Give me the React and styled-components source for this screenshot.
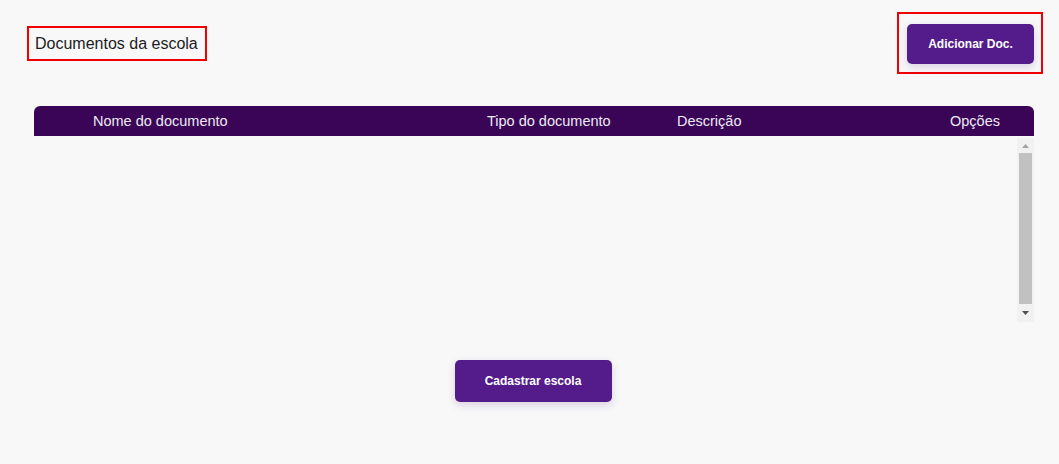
import React from 'react';
import styled, { createGlobalStyle } from 'styled-components';

const GlobalStyle = createGlobalStyle`
  html, body {
    margin: 0;
    padding: 0;
    background-color: #f8f8f8;
    font-family: "Liberation Sans", Arial, sans-serif;
  }
`;

const Page = styled.main`
  padding: 12px 25px 40px 34px;
  min-height: 464px;
  box-sizing: border-box;
`;

const TopBar = styled.header`
  display: flex;
  justify-content: space-between;
  align-items: center;
  margin-left: -7px;
  margin-right: -9px;
`;

const Highlight = styled.div`
  border: 2px solid #f00000;
  padding: ${p => p.$pad || '0'};
`;

const Title = styled.h1`
  margin: 0;
  font-size: 16px;
  font-weight: 500;
  color: #1c1c22;
  line-height: 31px;
`;

const Button = styled.button`
  border: none;
  border-radius: 5px;
  background-color: #541c8a;
  color: #ffffff;
  font-family: inherit;
  font-weight: 700;
  font-size: 12px;
  width: ${p => p.$width};
  height: ${p => p.$height};
  box-shadow: 0 3px 8px rgba(84, 28, 138, 0.18);
  cursor: pointer;
`;

const Table = styled.section`
  margin-top: 32px;
  width: 1000px;
`;

const HeaderRow = styled.div`
  display: grid;
  grid-template-columns: 453px 190px 1fr auto;
  align-items: center;
  height: 30px;
  padding: 0 34px 0 0;
  background-color: #3a0556;
  border-radius: 6px 6px 0 0;
  color: #eceaf4;
  font-size: 14.5px;
`;

const HeaderCell = styled.div`
  padding-left: ${p => p.$indent || '0'};
`;

const Body = styled.div`
  display: flex;
  height: 186px;
`;

const Rows = styled.div`
  flex: 1;
  overflow: hidden;
`;

const ScrollTrack = styled.div`
  display: flex;
  flex-direction: column;
  width: 17px;
  margin-top: 2px;
  background-color: #f1f1f1;
`;

const ScrollArrow = styled.div`
  display: flex;
  justify-content: center;
  align-items: center;
  height: ${p => p.$height};
`;

const ScrollThumb = styled.div`
  flex: 1;
  margin: 0 2px;
  background-color: #c1c1c1;
`;

const Arrow = ({ down }) => (
  <svg width="7" height="4" viewBox="0 0 7 4">
    {down
      ? <polygon points="0,0 7,0 3.5,4" fill="#505050" />
      : <polygon points="0,4 7,4 3.5,0" fill="#a3a3a3" />}
  </svg>
);

const Footer = styled.div`
  display: flex;
  justify-content: center;
  margin-top: 38px;
  padding-right: 2px;
`;

export default function App() {
  return (
    <>
      <GlobalStyle />
      <Page>
        <TopBar>
          <Highlight $pad="0 7px 0 6px">
            <Title>Documentos da escola</Title>
          </Highlight>
          <Highlight $pad="10px 7px 8px 8px">
            <Button $width="127px" $height="40px">Adicionar Doc.</Button>
          </Highlight>
        </TopBar>
        <Table>
          <HeaderRow>
            <HeaderCell $indent="59px">Nome do documento</HeaderCell>
            <HeaderCell>Tipo do documento</HeaderCell>
            <HeaderCell>Descrição</HeaderCell>
            <HeaderCell>Opções</HeaderCell>
          </HeaderRow>
          <Body>
            <Rows />
            <ScrollTrack>
              <ScrollArrow $height="15px"><Arrow /></ScrollArrow>
              <ScrollThumb />
              <ScrollArrow $height="18px"><Arrow down /></ScrollArrow>
            </ScrollTrack>
          </Body>
        </Table>
        <Footer>
          <Button $width="157px" $height="42px">Cadastrar escola</Button>
        </Footer>
      </Page>
    </>
  );
}
